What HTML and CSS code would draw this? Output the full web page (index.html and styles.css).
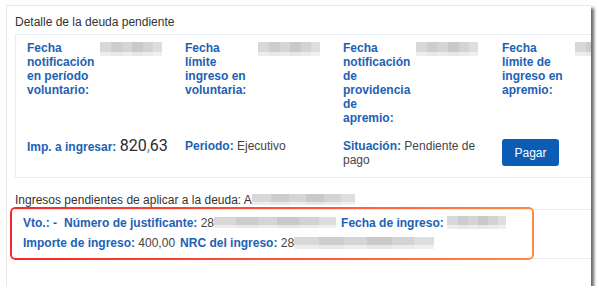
FILE: index.html
```html
<!DOCTYPE html>
<html lang="es">
<head>
    <meta charset="UTF-8">
    <meta name="viewport" content="width=device-width, initial-scale=1.0">
    <title>Detalle de la deuda pendiente</title>
    <link rel="stylesheet" href="styles.css">
</head>
<body>
    <div class="frame">
        <h2 class="title">Detalle de la deuda pendiente</h2>

        <div class="panel">
            <div class="grid">
                <div class="field">
                    <span class="label">Fecha notificación en período voluntario:</span>
                    <span class="blur blur-date"></span>
                </div>
                <div class="field">
                    <span class="label">Fecha límite ingreso en voluntaria:</span>
                    <span class="blur blur-date"></span>
                </div>
                <div class="field">
                    <span class="label">Fecha notificación de providencia de apremio:</span>
                    <span class="blur blur-date"></span>
                </div>
                <div class="field">
                    <span class="label">Fecha límite de ingreso en apremio:</span>
                    <span class="blur blur-date"></span>
                </div>
            </div>

            <div class="grid summary">
                <div class="item"><b>Imp. a ingresar:</b> <span class="amount">820<i>,</i>63</span></div>
                <div class="item"><b>Periodo:</b> Ejecutivo</div>
                <div class="item"><b>Situación:</b> Pendiente de pago</div>
                <div class="item"><button class="pay">Pagar</button></div>
            </div>
        </div>

        <p class="pending">Ingresos pendientes de aplicar a la deuda: A<span class="blur blur-ref"></span></p>

        <div class="payments">
            <div class="line">
                <b>Vto.: -</b>
                <span><b>Número de justificante:</b> 28<span class="blur blur-just"></span></span>
                <span><b>Fecha de ingreso:</b> <span class="blur blur-fecha"></span></span>
            </div>
            <div class="line">
                <span><b>Importe de ingreso:</b> 400,00</span>
                <span><b>NRC del ingreso:</b> 28<span class="blur blur-nrc"></span></span>
            </div>
        </div>

        <div class="highlight"></div>
    </div>
</body>
</html>
```

FILE: styles.css
```css
body {
    margin: 0;
    background: #fff;
    font-family: "Liberation Sans", Arial, sans-serif;
    font-size: 12px;
    color: #444;
}

.frame {
    position: relative;
    margin: 5px 0 0 6px;
    width: 585px;
    height: 281px;
    border-top: 1px solid #e8e8e8;
    border-left: 1px solid #e8e8e8;
    box-shadow: 3px 3px 3px rgba(0, 0, 0, 0.6);
    overflow: hidden;
    box-sizing: border-box;
}

.title {
    margin: 0;
    padding: 8px 0 0 8px;
    font-size: 12px;
    font-weight: normal;
    line-height: 16px;
    color: #333;
}

.panel {
    margin: 4px 0 0 8px;
    padding: 6px 0 10px 11px;
    border: 1px solid #e4ebf1;
    border-right: none;
}

.grid {
    display: grid;
    grid-template-columns: 158px 158px 159px 158px;
}

.field {
    display: flex;
    align-items: flex-start;
}

.label {
    width: 67.6px;
    margin-right: 2.4px;
    font-weight: bold;
    line-height: 14px;
    color: #1d61b4;
}

.blur {
    display: inline-block;
    vertical-align: middle;
    height: 12px;
    background:
        linear-gradient(180deg, rgba(255, 255, 255, 0) 70%, rgba(255, 255, 255, 0.55) 70%),
        linear-gradient(90deg, #d8d8d8 0 18%, #cdcdcd 18% 36%, #d5d5d5 36% 52%, #c9c9c9 52% 70%, #d3d3d3 70% 86%, #dedede 86%);
}

.field .blur {
    margin: 1px 0 0 3px;
    height: 14px;
}

.blur-date {
    width: 62px;
}

.summary {
    margin-top: 14px;
    line-height: 14px;
    align-items: start;
}

.summary .item {
    padding-right: 14px;
}

.summary b {
    color: #1d61b4;
}

.amount {
    font-family: Roboto, "Liberation Sans", sans-serif;
    font-size: 16px;
    color: #2b2b2b;
}

.amount i {
    font-style: normal;
    color: #7d8fa8;
}

.pay {
    width: 57px;
    height: 27px;
    border: none;
    border-radius: 3px;
    background-color: #0b5cb5;
    color: #fff;
    font-family: "Liberation Sans", Arial, sans-serif;
    font-size: 12px;
}

.pending {
    margin: 14px 0 0 8px;
    line-height: 16px;
    color: #333;
}

.blur-ref {
    width: 103px;
    height: 11px;
    margin-top: -3px;
}

.payments {
    margin: 1px 0 0 8px;
    padding: 3px 0 5px 8px;
    border-top: 1px solid #e4ebf1;
    border-bottom: 1px solid #e4ebf1;
}

.line {
    display: flex;
    gap: 5px;
    line-height: 20px;
}

.line b {
    color: #1d61b4;
}

.line > b {
    margin-right: 2px;
}

.blur-just {
    width: 122px;
    height: 11px;
    margin-top: -2px;
}

.blur-fecha {
    width: 59px;
    height: 13px;
    margin-top: -2px;
}

.blur-nrc {
    width: 140px;
    height: 12px;
    margin-top: -2px;
}

/* red call-out drawn over the payment rows */
.highlight {
    position: absolute;
    left: 3px;
    top: 201px;
    width: 524px;
    height: 53px;
    padding: 2px;
    box-sizing: border-box;
    border-radius: 5px;
    background: linear-gradient(90deg, #f22a2a, #ff5a3a 60%, #ff8a4a);
    -webkit-mask: linear-gradient(#000 0 0) content-box, linear-gradient(#000 0 0);
    -webkit-mask-composite: xor;
    mask-composite: exclude;
}
```
